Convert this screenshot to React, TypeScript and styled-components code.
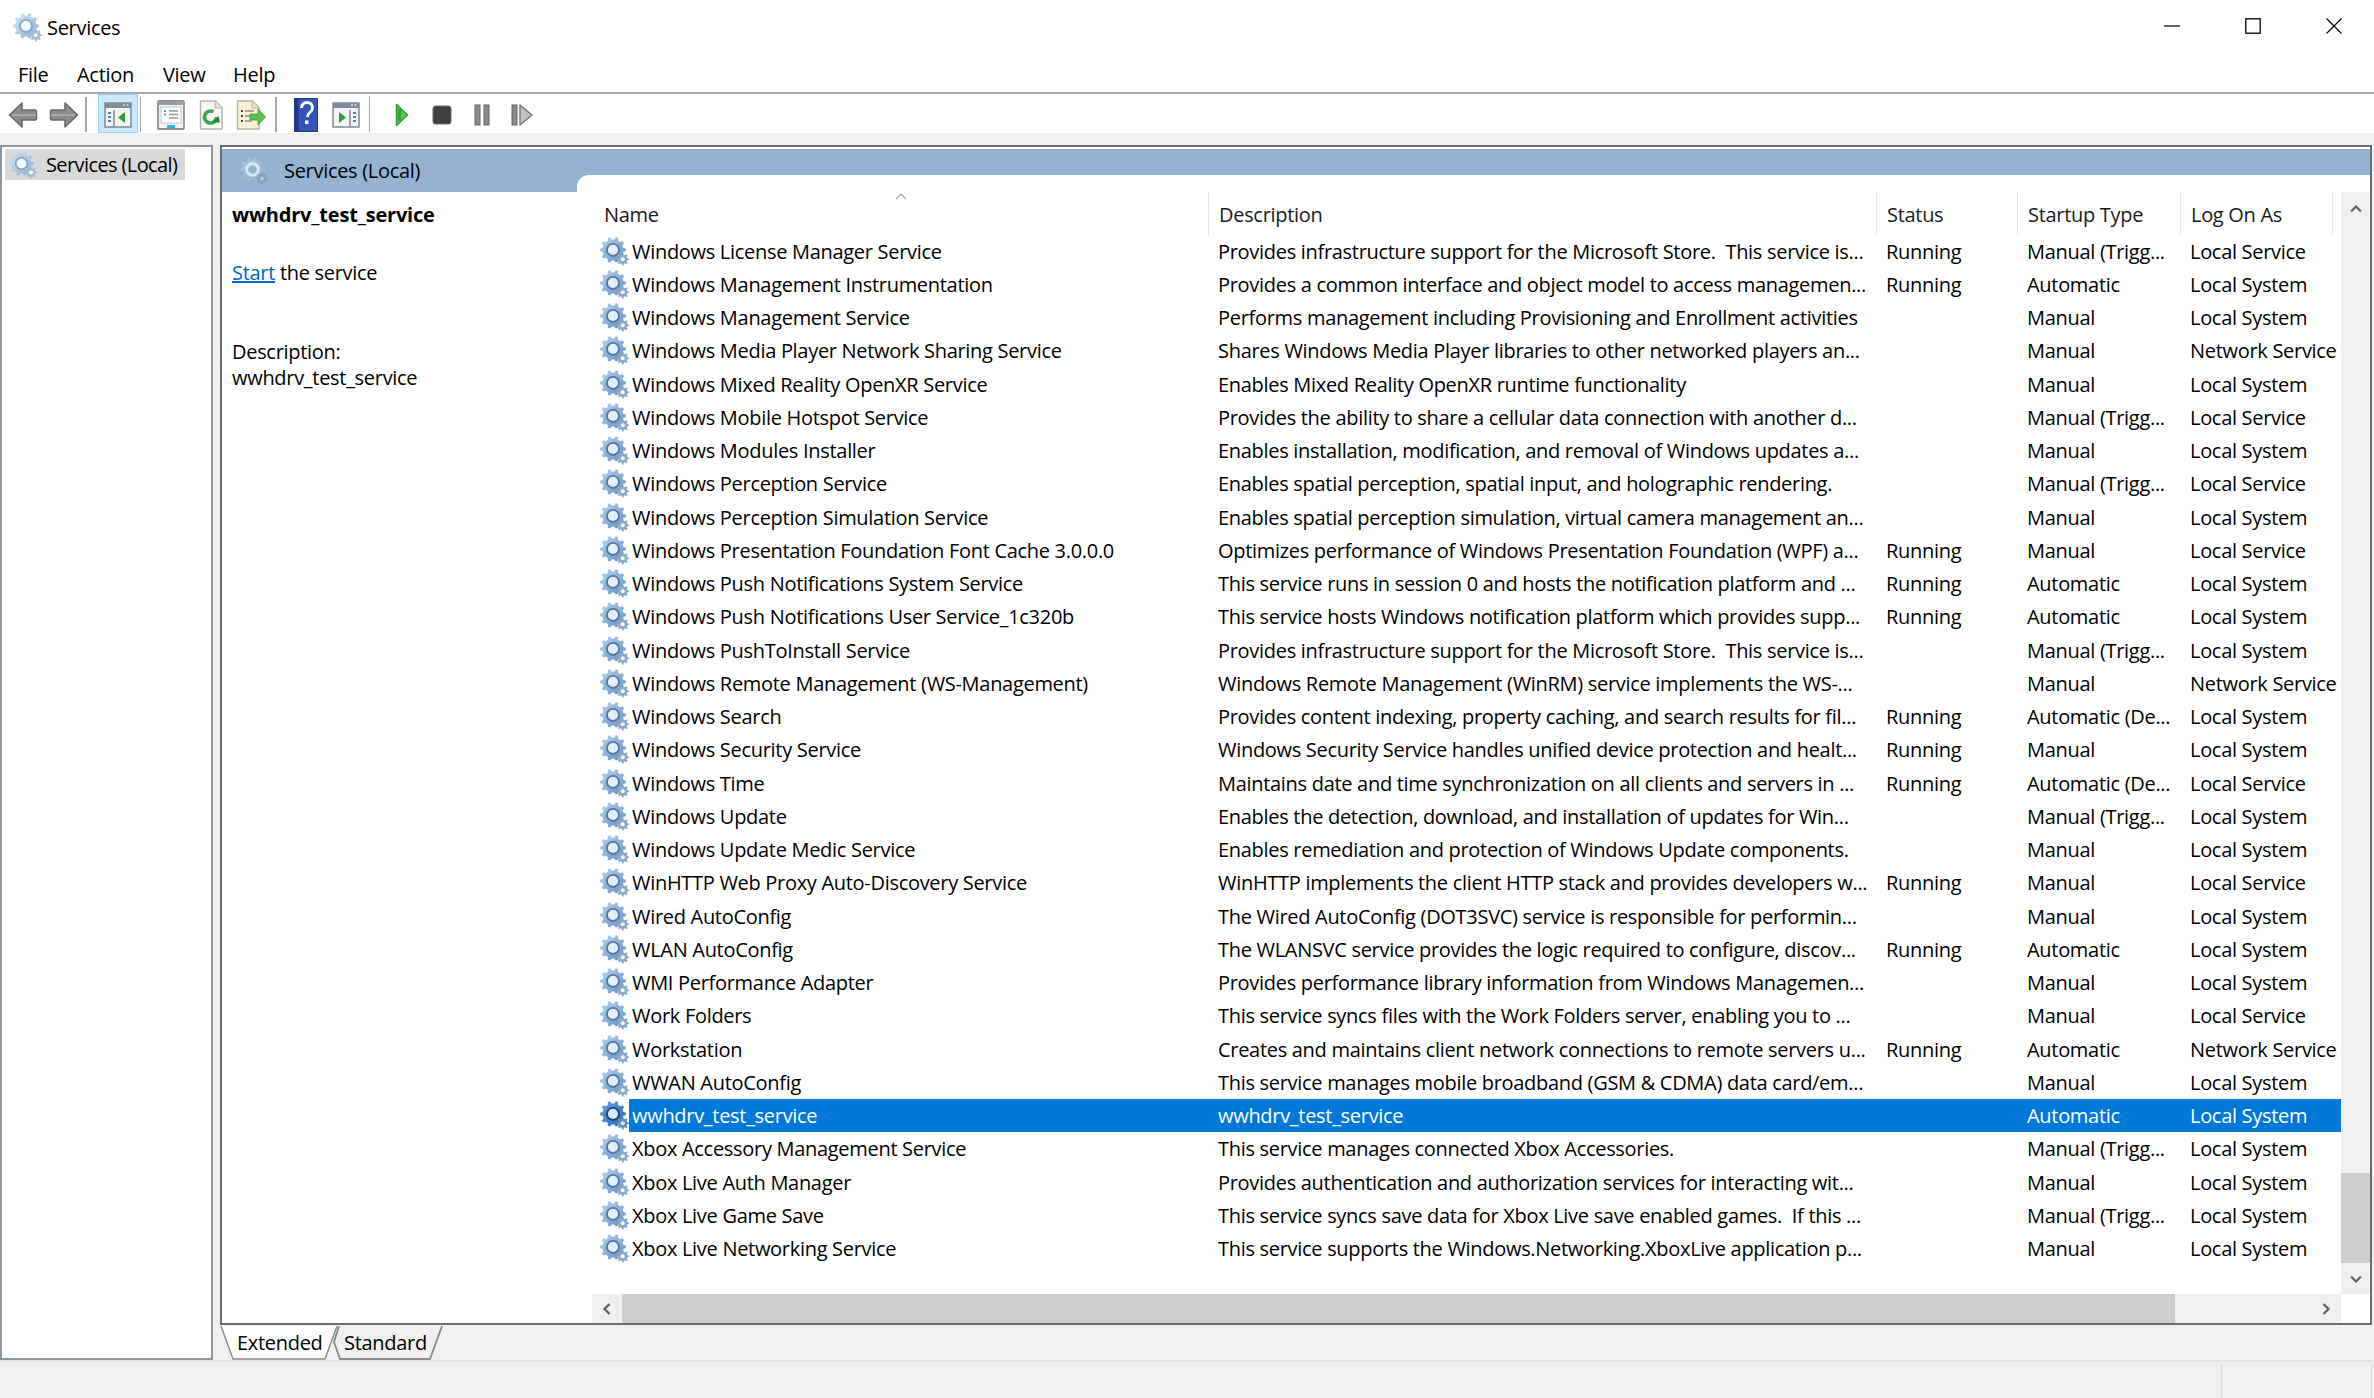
import React, { useId } from 'react';
import styled, { createGlobalStyle } from 'styled-components';

const FONT = '"Open Sans", "Noto Sans", sans-serif';

type Service = {
  name: string;
  desc: string;
  status?: string;
  startup: string;
  logon: string;
  selected?: boolean;
};

const TRUST = 'Provides infrastructure support for the Microsoft Store.  This service is...';

const services: Service[] = [
  { name: 'Windows License Manager Service', desc: TRUST, status: 'Running', startup: 'Manual (Trigg...', logon: 'Local Service' },
  { name: 'Windows Management Instrumentation', desc: 'Provides a common interface and object model to access managemen...', status: 'Running', startup: 'Automatic', logon: 'Local System' },
  { name: 'Windows Management Service', desc: 'Performs management including Provisioning and Enrollment activities', startup: 'Manual', logon: 'Local System' },
  { name: 'Windows Media Player Network Sharing Service', desc: 'Shares Windows Media Player libraries to other networked players an...', startup: 'Manual', logon: 'Network Service' },
  { name: 'Windows Mixed Reality OpenXR Service', desc: 'Enables Mixed Reality OpenXR runtime functionality', startup: 'Manual', logon: 'Local System' },
  { name: 'Windows Mobile Hotspot Service', desc: 'Provides the ability to share a cellular data connection with another d...', startup: 'Manual (Trigg...', logon: 'Local Service' },
  { name: 'Windows Modules Installer', desc: 'Enables installation, modification, and removal of Windows updates a...', startup: 'Manual', logon: 'Local System' },
  { name: 'Windows Perception Service', desc: 'Enables spatial perception, spatial input, and holographic rendering.', startup: 'Manual (Trigg...', logon: 'Local Service' },
  { name: 'Windows Perception Simulation Service', desc: 'Enables spatial perception simulation, virtual camera management an...', startup: 'Manual', logon: 'Local System' },
  { name: 'Windows Presentation Foundation Font Cache 3.0.0.0', desc: 'Optimizes performance of Windows Presentation Foundation (WPF) a...', status: 'Running', startup: 'Manual', logon: 'Local Service' },
  { name: 'Windows Push Notifications System Service', desc: 'This service runs in session 0 and hosts the notification platform and ...', status: 'Running', startup: 'Automatic', logon: 'Local System' },
  { name: 'Windows Push Notifications User Service_1c320b', desc: 'This service hosts Windows notification platform which provides supp...', status: 'Running', startup: 'Automatic', logon: 'Local System' },
  { name: 'Windows PushToInstall Service', desc: TRUST, startup: 'Manual (Trigg...', logon: 'Local System' },
  { name: 'Windows Remote Management (WS-Management)', desc: 'Windows Remote Management (WinRM) service implements the WS-...', startup: 'Manual', logon: 'Network Service' },
  { name: 'Windows Search', desc: 'Provides content indexing, property caching, and search results for fil...', status: 'Running', startup: 'Automatic (De...', logon: 'Local System' },
  { name: 'Windows Security Service', desc: 'Windows Security Service handles unified device protection and healt...', status: 'Running', startup: 'Manual', logon: 'Local System' },
  { name: 'Windows Time', desc: 'Maintains date and time synchronization on all clients and servers in ...', status: 'Running', startup: 'Automatic (De...', logon: 'Local Service' },
  { name: 'Windows Update', desc: 'Enables the detection, download, and installation of updates for Win...', startup: 'Manual (Trigg...', logon: 'Local System' },
  { name: 'Windows Update Medic Service', desc: 'Enables remediation and protection of Windows Update components.', startup: 'Manual', logon: 'Local System' },
  { name: 'WinHTTP Web Proxy Auto-Discovery Service', desc: 'WinHTTP implements the client HTTP stack and provides developers w...', status: 'Running', startup: 'Manual', logon: 'Local Service' },
  { name: 'Wired AutoConfig', desc: 'The Wired AutoConfig (DOT3SVC) service is responsible for performin...', startup: 'Manual', logon: 'Local System' },
  { name: 'WLAN AutoConfig', desc: 'The WLANSVC service provides the logic required to configure, discov...', status: 'Running', startup: 'Automatic', logon: 'Local System' },
  { name: 'WMI Performance Adapter', desc: 'Provides performance library information from Windows Managemen...', startup: 'Manual', logon: 'Local System' },
  { name: 'Work Folders', desc: 'This service syncs files with the Work Folders server, enabling you to ...', startup: 'Manual', logon: 'Local Service' },
  { name: 'Workstation', desc: 'Creates and maintains client network connections to remote servers u...', status: 'Running', startup: 'Automatic', logon: 'Network Service' },
  { name: 'WWAN AutoConfig', desc: 'This service manages mobile broadband (GSM & CDMA) data card/em...', startup: 'Manual', logon: 'Local System' },
  { name: 'wwhdrv_test_service', desc: 'wwhdrv_test_service', startup: 'Automatic', logon: 'Local System', selected: true },
  { name: 'Xbox Accessory Management Service', desc: 'This service manages connected Xbox Accessories.', startup: 'Manual (Trigg...', logon: 'Local System' },
  { name: 'Xbox Live Auth Manager', desc: 'Provides authentication and authorization services for interacting wit...', startup: 'Manual', logon: 'Local System' },
  { name: 'Xbox Live Game Save', desc: 'This service syncs save data for Xbox Live save enabled games.  If this ...', startup: 'Manual (Trigg...', logon: 'Local System' },
  { name: 'Xbox Live Networking Service', desc: 'This service supports the Windows.Networking.XboxLive application p...', startup: 'Manual', logon: 'Local System' },
];

const GlobalStyle = createGlobalStyle`
  html, body {
    margin: 0;
    padding: 0;
    background: #f0f0f0;
  }
  body {
    font-family: ${FONT};
    font-size: 20px;
    letter-spacing: -0.3px;
    color: #000;
    -webkit-font-smoothing: antialiased;
  }
`;

const Window = styled.div`
  width: 2374px;
  height: 1398px;
  display: flex;
  flex-direction: column;
  overflow: hidden;
`;

const TitleBar = styled.div`
  height: 54px;
  background: #fff;
  display: flex;
  align-items: center;
  padding: 0 0 2px 13px;
`;

const TitleText = styled.span`
  margin-left: 5px;
  font-size: 20px;
`;

const WindowControls = styled.div`
  margin-left: auto;
  display: flex;
  height: 100%;
  align-items: flex-start;
`;

const WindowControl = styled.div`
  width: 81px;
  height: 52px;
  display: flex;
  align-items: center;
  justify-content: center;
`;

const MenuBar = styled.div`
  height: 36px;
  background: #fff;
  display: flex;
  align-items: center;
  border-bottom: 2px solid #a9a9a9;
  padding-left: 18px;
`;

const MenuItem = styled.span<{ $w: number }>`
  width: ${({ $w }) => $w}px;
  font-size: 20px;
`;

const Toolbar = styled.div`
  height: 39px;
  background: #fff;
  display: flex;
  align-items: stretch;
  padding-left: 2px;
`;

const ToolGroup = styled.div<{ $pad?: number }>`
  display: flex;
  padding-left: ${({ $pad }) => $pad || 0}px;
`;

const ToolButton = styled.div<{ $active?: boolean; $w?: number }>`
  width: ${({ $w }) => $w || 40}px;
  display: flex;
  align-items: center;
  justify-content: center;
  box-sizing: border-box;
  padding-top: 2px;
  ${({ $active }) => $active && 'background: #cce8ff; border: 1px solid #99d1ff;'}
`;

const ToolSep = styled.div<{ $ml: number }>`
  width: 1.5px;
  margin: 3px 0 1px ${({ $ml }) => $ml}px;
  background: #a8a8a8;
`;

const Gutter = styled.div`
  height: 12px;
  background: #f0f0f0;
`;

const Workspace = styled.div`
  height: 1215px;
  display: flex;
  gap: 7px;
  background: #f0f0f0;
`;

const TreePane = styled.div`
  width: 213px;
  box-sizing: border-box;
  background: #fff;
  border: 2px solid #8f969e;
  padding: 2px 0 0 3px;
`;

const TreeItem = styled.div`
  width: 180px;
  height: 31px;
  box-sizing: border-box;
  background: #d9d9d9;
  display: flex;
  align-items: center;
  padding-left: 4px;
  gap: 9px;
  font-size: 20px;
  letter-spacing: -0.6px;
  white-space: nowrap;
`;

const RightColumn = styled.div`
  flex: 1;
  display: flex;
  flex-direction: column;
  margin-right: 2px;
`;

const Panel = styled.div`
  height: 1180px;
  box-sizing: border-box;
  background: #fff;
  border: 2px solid #6d6d6d;
  padding-top: 2px;
  display: flex;
  flex-direction: column;
`;

const PanelHeader = styled.div`
  height: 43px;
  display: flex;
  background: #96b2d1;
  flex-shrink: 0;
`;

const HeaderTitle = styled.div`
  width: 355px;
  display: flex;
  align-items: center;
  padding-left: 18px;
  gap: 16px;
  box-sizing: border-box;
  font-size: 20px;
`;

const HeaderRest = styled.div`
  flex: 1;
  padding-top: 26px;
  display: flex;
`;

const HeaderNotch = styled.div`
  flex: 1;
  background: #fff;
  border-top-left-radius: 12px;
`;

const PanelBody = styled.div`
  flex: 1;
  display: flex;
  min-height: 0;
`;

const Details = styled.div`
  width: 370px;
  flex-shrink: 0;
  box-sizing: border-box;
  padding: 9px 0 0 10px;
  font-size: 20px;
`;

const DetailsTitle = styled.div`
  font-weight: 700;
  font-size: 20px;
  letter-spacing: -0.2px;
  height: 59px;
`;

const DetailsLine = styled.div<{ $gap?: number }>`
  height: 26px;
  line-height: 26px;
  margin-top: ${({ $gap }) => $gap || 0}px;
`;

const StartLink = styled.span`
  color: #0066cc;
  text-decoration: underline;
`;

const ListArea = styled.div`
  flex: 1;
  min-width: 0;
  display: grid;
  grid-template-columns: 1fr 29px;
  grid-template-rows: 1fr 29px;
`;

const ListMain = styled.div`
  min-width: 0;
  overflow: hidden;
`;

const HeaderRow = styled.div`
  height: 42.5px;
  display: flex;
  position: relative;
`;

const HeaderCell = styled.div<{ $w: number; $pad?: number }>`
  width: ${({ $w }) => $w}px;
  flex-shrink: 0;
  box-sizing: border-box;
  padding: 2px 0 0 ${({ $pad }) => $pad || 10}px;
  display: flex;
  align-items: center;
  font-size: 20px;
  color: #1a1a1a;
  border-right: 1px solid #e5e5e5;
  &:last-child {
    border-right: 0;
  }
`;

const SortCaret = styled.svg`
  position: absolute;
  left: 303px;
  top: 1px;
`;

const Row = styled.div`
  height: 33.25px;
  display: flex;
  align-items: center;
  padding-left: 8px;
`;

const RowBody = styled.div<{ $selected?: boolean }>`
  flex: 1;
  height: 100%;
  display: flex;
  align-items: center;
  background: ${({ $selected }) => ($selected ? '#0078d7' : 'transparent')};
  color: ${({ $selected }) => ($selected ? '#fff' : '#000')};
`;

const Cell = styled.div<{ $w: number; $pad?: number }>`
  width: ${({ $w }) => $w}px;
  flex-shrink: 0;
  box-sizing: border-box;
  padding-left: ${({ $pad }) => $pad || 0}px;
  white-space: pre;
  overflow: hidden;
  font-size: 20px;
`;

const ScrollbarV = styled.div`
  background: #f0f0f0;
  display: flex;
  flex-direction: column;
  align-items: center;
  padding-top: 12px;
  box-sizing: border-box;
`;

const ThumbV = styled.div`
  width: 100%;
  height: 90px;
  margin-top: auto;
  background: #cdcdcd;
`;

const ArrowSlot = styled.div`
  height: 31px;
  flex-shrink: 0;
  display: flex;
  align-items: center;
  justify-content: center;
`;

const ScrollbarH = styled.div`
  background: #f0f0f0;
  display: flex;
  align-items: center;
`;

const ThumbH = styled.div`
  height: 100%;
  width: 1553px;
  background: #cdcdcd;
`;

const ArrowSlotH = styled.div<{ $auto?: boolean }>`
  width: 30px;
  height: 100%;
  flex-shrink: 0;
  display: flex;
  align-items: center;
  justify-content: center;
  ${({ $auto }) => $auto && 'margin-left: auto;'}
`;

const CornerFill = styled.div`
  background: #fff;
`;

const TabStrip = styled.div`
  height: 35px;
  display: flex;
`;

const Tab = styled.div<{ $w: number; $ml?: number; $pad: number }>`
  position: relative;
  width: ${({ $w }) => $w}px;
  margin-left: ${({ $ml }) => $ml || 0}px;
  padding-left: ${({ $pad }) => $pad}px;
  box-sizing: border-box;
  font-size: 20px;
  display: flex;
  align-items: center;
  > svg {
    position: absolute;
    left: 0;
    top: 1px;
  }
  > span {
    position: relative;
  }
`;

const StatusBar = styled.div`
  flex: 1;
  background: #f0f0f0;
  border-top: 2px solid #e6e6e6;
  display: flex;
  justify-content: flex-end;
  padding: 3px 2px 0 0;
`;

const StatusCell = styled.div<{ $w: number }>`
  width: ${({ $w }) => $w}px;
  border-left: 1px solid #d9d9d9;
  border-right: 1px solid #d9d9d9;
`;

// gear outline with square-ish teeth, centred on cx/cy
function gearPath(cx: number, cy: number, ro: number, ri: number, teeth: number) {
  const pts: string[] = [];
  const step = (Math.PI * 2) / teeth;
  for (let i = 0; i < teeth; i++) {
    const a = i * step;
    const list: [number, number][] = [
      [a - step * 0.28, ri],
      [a - step * 0.16, ro],
      [a + step * 0.16, ro],
      [a + step * 0.28, ri],
    ];
    list.forEach(([an, r]) => pts.push(`${(cx + Math.cos(an) * r).toFixed(2)} ${(cy + Math.sin(an) * r).toFixed(2)}`));
  }
  return `M${pts.join('L')}Z`;
}

const BIG_GEAR = gearPath(12.5, 12.5, 12.5, 10.2, 10);
const SMALL_GEAR = gearPath(22, 21.5, 6, 4.5, 8);

type GearProps = { size?: number; tone?: 'normal' | 'pale' | 'title' | 'selected' };

const TONES = {
  normal: { stops: ['#bcd4ec', '#82aad4', '#5f8cba'], ring: '#52769c', hole: '#e6edf4', small: '#8aa8c4', center: '#f4f7fa' },
  title: { stops: ['#d4e4f2', '#a9c6e0', '#8fb0cf'], ring: '#86a6c6', hole: '#f4f8fb', small: '#a6bccf', center: '#fff' },
  pale: { stops: ['#a8c4de', '#9cb9d6', '#96b2d1'], ring: '#d5e8f3', hole: '#96b2d1', small: '#84a0bc', center: '#b9cde0' },
  selected: { stops: ['#6fa6dc', '#3f7fc4', '#2a66a8'], ring: '#1c4474', hole: '#d8e8f6', small: '#5f8fbf', center: '#dbe8f4' },
};

const Gear = ({ size = 28, tone = 'normal' }: GearProps) => {
  const id = useId();
  const t = TONES[tone];
  return (
    <svg width={size} height={size} viewBox="0 0 28 28" style={{ flexShrink: 0 }}>
      <defs>
        <linearGradient id={id} x1="0" y1="0" x2="1" y2="1">
          <stop offset="0" stopColor={t.stops[0]} />
          <stop offset="0.6" stopColor={t.stops[1]} />
          <stop offset="1" stopColor={t.stops[2]} />
        </linearGradient>
      </defs>
      <path d={BIG_GEAR} fill={`url(#${id})`} />
      <circle cx="12.5" cy="12.5" r="5.8" fill={t.hole} stroke={t.ring} strokeWidth={tone === 'pale' ? 3 : 1.8} />
      <path d={SMALL_GEAR} fill={t.small} />
      <circle cx="22" cy="21.5" r="2" fill={t.center} />
    </svg>
  );
};

const ArrowIcon = ({ flip }: { flip?: boolean }) => (
  <svg width="30" height="28" viewBox="0 0 30 28" style={flip ? { transform: 'scaleX(-1)' } : undefined}>
    <path d="M14 2 1.5 14 14 26V19H27a1.5 1.5 0 0 0 1.5-1.5v-7A1.5 1.5 0 0 0 27 9H14Z" fill="#8c8c8c" stroke="#6a6a6a" strokeWidth="1.6" strokeLinejoin="round" />
    <path d="M4 14h24" stroke="#a8a8a8" strokeWidth="2" />
  </svg>
);

const ConsoleTreeIcon = () => (
  <svg width="28" height="28" viewBox="0 0 28 28">
    <rect x="1" y="2" width="26" height="24" fill="#f4f4f4" stroke="#7f8b96" strokeWidth="1.5" />
    <rect x="1" y="2" width="26" height="5" fill="#7f8b96" />
    <path d="M19 4h2M22.5 4h2" stroke="#e8e8e8" strokeWidth="1.4" />
    <path d="M10 9v16" stroke="#7f8b96" strokeWidth="1.5" />
    <path d="M4 12h3M4 16h3M4 20h3" stroke="#4f81bd" strokeWidth="2" />
    <path d="M21 11v11l-7-5.5Z" fill="#2e9e3e" />
  </svg>
);

const SheetIcon = () => (
  <svg width="28" height="30" viewBox="0 0 28 30">
    <rect x="1" y="1" width="26" height="28" rx="1" fill="#f3f3f3" stroke="#8a8f94" strokeWidth="1.8" />
    <rect x="1" y="1" width="26" height="4" fill="#9a9ea3" />
    <rect x="4" y="7" width="20" height="16" fill="#fff" stroke="#c4c8cc" />
    <path d="M12 11h9M12 14.5h9M12 18h9" stroke="#8f979f" strokeWidth="1.6" />
    <path d="M7 11h2M7 14.5h2" stroke="#5b8cc4" strokeWidth="2" />
    <rect x="10" y="25" width="8" height="3" fill="#38b0e0" />
  </svg>
);

const RefreshIcon = () => (
  <svg width="24" height="30" viewBox="0 0 24 30">
    <path d="M1.5 1h15L23 7.5V29H1.5Z" fill="#f7f7f5" stroke="#b3b3ad" strokeWidth="1.4" />
    <path d="M16 1v7h7" fill="#e2e2dc" stroke="#b3b3ad" />
    <path d="M17.5 17a6 6 0 1 1-3-5.2" fill="none" stroke="#3aa84a" strokeWidth="3.6" />
    <path d="M13 22.5h8l-1.5-6.5Z" fill="#1f8a35" />
  </svg>
);

const ExportIcon = () => (
  <svg width="30" height="30" viewBox="0 0 30 30">
    <path d="M1.5 1h15L23 7.5V29H1.5Z" fill="#f8f3d8" stroke="#b9b49a" strokeWidth="1.4" />
    <path d="M16 1v7h7" fill="#ebe5c0" stroke="#b9b49a" />
    <path d="M5 11h2M5 16h2M5 21h2" stroke="#3f3f3f" strokeWidth="2" />
    <path d="M9 11h9M9 16h7M9 21h7" stroke="#8f8f80" strokeWidth="1.6" />
    <path d="M14 14h8v-5l7.5 8-7.5 8v-5h-8Z" fill="#5fc04c" stroke="#3d9e36" strokeWidth="0.8" />
  </svg>
);

const HelpIcon = () => (
  <svg width="24" height="34" viewBox="0 0 24 34">
    <rect x="0.5" y="0.5" width="23" height="33" fill="#3556b8" stroke="#233a88" />
    <rect x="0.5" y="0.5" width="4" height="33" fill="#1f3590" />
    <path d="M7.5 10c.3-3.5 2.6-5.5 5.5-5.5 3.2 0 5.5 2 5.5 5 0 2.5-1.4 3.8-3 5.2-1.4 1.2-2 2.2-2 4.3" fill="none" stroke="#fff" strokeWidth="2.8" />
    <rect x="11" y="22.5" width="3.4" height="3.6" fill="#fff" />
  </svg>
);

const ActionPaneIcon = () => (
  <svg width="28" height="28" viewBox="0 0 28 28">
    <rect x="1" y="2" width="26" height="24" fill="#f4f4f4" stroke="#7f8b96" strokeWidth="1.5" />
    <rect x="1" y="2" width="26" height="5" fill="#7f8b96" />
    <path d="M19 4h2M22.5 4h2" stroke="#e8e8e8" strokeWidth="1.4" />
    <path d="M18 9v16" stroke="#7f8b96" strokeWidth="1.5" />
    <path d="M21 12h3M21 16h3M21 20h3" stroke="#4f81bd" strokeWidth="2" />
    <path d="M7 11v11l7-5.5Z" fill="#2e9e3e" />
  </svg>
);

const PlayIcon = () => (
  <svg width="14" height="24" viewBox="0 0 14 24">
    <path d="M1.5 1.5 12.5 12 1.5 22.5Z" fill="#6cc45c" stroke="#2ca02c" strokeWidth="1.5" strokeLinejoin="round" />
    <path d="M4.5 6v12" stroke="#2fa62f" strokeWidth="3.5" />
  </svg>
);

const StopIcon = () => (
  <svg width="20" height="20" viewBox="0 0 20 20">
    <rect x="1" y="1" width="18" height="18" rx="2.5" fill="#3f3f3f" stroke="#6a6a6a" />
  </svg>
);

const PauseIcon = () => (
  <svg width="16" height="22" viewBox="0 0 16 22">
    <rect x="1" y="1" width="5" height="20" fill="#8a8a8a" stroke="#666" />
    <rect x="10" y="1" width="5" height="20" fill="#8a8a8a" stroke="#666" />
  </svg>
);

const ResumeIcon = () => (
  <svg width="22" height="22" viewBox="0 0 22 22">
    <rect x="1" y="1" width="5" height="20" fill="#8a8a8a" stroke="#666" />
    <path d="M9 1 21 11 9 21Z" fill="#c0c0c0" stroke="#777" strokeWidth="1.4" strokeLinejoin="round" />
  </svg>
);

const Chevron = ({ dir }: { dir: 'up' | 'down' | 'left' | 'right' }) => {
  const rot = { up: 0, down: 180, left: -90, right: 90 }[dir];
  return (
    <svg width="12" height="10" viewBox="0 0 12 10" style={{ transform: `rotate(${rot}deg)` }}>
      <path d="M1 7.5 6 2.5 11 7.5" fill="none" stroke="#606060" strokeWidth="2.2" />
    </svg>
  );
};

const nameW = 589;
const descW = 668;
const statusW = 141;
const startupW = 163;
const logonW = 152;

export default function App() {
  return (
    <>
      <GlobalStyle />
      <Window>
        <TitleBar>
          <Gear size={29} tone="title" />
          <TitleText>Services</TitleText>
          <WindowControls>
            <WindowControl>
              <svg width="16" height="16" viewBox="0 0 16 16"><path d="M0 8h16" stroke="#000" strokeWidth="1.2" /></svg>
            </WindowControl>
            <WindowControl>
              <svg width="16" height="16" viewBox="0 0 16 16"><rect x="0.8" y="0.8" width="14.4" height="14.4" fill="none" stroke="#000" strokeWidth="1.3" /></svg>
            </WindowControl>
            <WindowControl>
              <svg width="16" height="16" viewBox="0 0 16 16"><path d="M.5.5l15 15M15.5.5l-15 15" stroke="#000" strokeWidth="1.1" /></svg>
            </WindowControl>
          </WindowControls>
        </TitleBar>
        <MenuBar>
          <MenuItem $w={59}>File</MenuItem>
          <MenuItem $w={86}>Action</MenuItem>
          <MenuItem $w={70}>View</MenuItem>
          <MenuItem $w={60}>Help</MenuItem>
        </MenuBar>
        <Toolbar>
          <ToolGroup>
            <ToolButton $w={41}><ArrowIcon /></ToolButton>
            <ToolButton $w={41}><ArrowIcon flip /></ToolButton>
          </ToolGroup>
          <ToolSep $ml={1} />
          <ToolGroup $pad={11}>
            <ToolButton $active><ConsoleTreeIcon /></ToolButton>
          </ToolGroup>
          <ToolSep $ml={2} />
          <ToolGroup $pad={10}>
            <ToolButton><SheetIcon /></ToolButton>
            <ToolButton><RefreshIcon /></ToolButton>
            <ToolButton><ExportIcon /></ToolButton>
          </ToolGroup>
          <ToolSep $ml={4} />
          <ToolGroup $pad={9}>
            <ToolButton><HelpIcon /></ToolButton>
            <ToolButton><ActionPaneIcon /></ToolButton>
          </ToolGroup>
          <ToolSep $ml={3} />
          <ToolGroup $pad={12}>
            <ToolButton><PlayIcon /></ToolButton>
            <ToolButton><StopIcon /></ToolButton>
            <ToolButton><PauseIcon /></ToolButton>
            <ToolButton><ResumeIcon /></ToolButton>
          </ToolGroup>
        </Toolbar>
        <Gutter />
        <Workspace>
          <TreePane>
            <TreeItem>
              <Gear size={28} tone="title" />
              Services (Local)
            </TreeItem>
          </TreePane>
          <RightColumn>
            <Panel>
              <PanelHeader>
                <HeaderTitle>
                  <Gear size={28} tone="pale" />
                  Services (Local)
                </HeaderTitle>
                <HeaderRest>
                  <HeaderNotch />
                </HeaderRest>
              </PanelHeader>
              <PanelBody>
                <Details>
                  <DetailsTitle>wwhdrv_test_service</DetailsTitle>
                  <DetailsLine><StartLink>Start</StartLink> the service</DetailsLine>
                  <DetailsLine $gap={53}>Description:</DetailsLine>
                  <DetailsLine>wwhdrv_test_service</DetailsLine>
                </Details>
                <ListArea>
                  <ListMain>
                    <HeaderRow>
                      <HeaderCell $w={nameW + 28} $pad={12}>Name</HeaderCell>
                      <HeaderCell $w={descW}>Description</HeaderCell>
                      <HeaderCell $w={statusW}>Status</HeaderCell>
                      <HeaderCell $w={startupW}>Startup Type</HeaderCell>
                      <HeaderCell $w={logonW}>Log On As</HeaderCell>
                      <SortCaret width="12" height="7" viewBox="0 0 12 7">
                        <path d="M1 6 6 1l5 5" fill="none" stroke="#a8a8a8" strokeWidth="1.2" />
                      </SortCaret>
                    </HeaderRow>
                    {services.map((s) => (
                      <Row key={s.name}>
                        <Gear size={29} tone={s.selected ? 'selected' : 'normal'} />
                        <RowBody $selected={s.selected}>
                          <Cell $w={nameW} $pad={3}>{s.name}</Cell>
                          <Cell $w={descW}>{s.desc}</Cell>
                          <Cell $w={statusW}>{s.status}</Cell>
                          <Cell $w={startupW}>{s.startup}</Cell>
                          <Cell $w={logonW}>{s.logon}</Cell>
                        </RowBody>
                      </Row>
                    ))}
                  </ListMain>
                  <ScrollbarV>
                    <Chevron dir="up" />
                    <ThumbV />
                    <ArrowSlot><Chevron dir="down" /></ArrowSlot>
                  </ScrollbarV>
                  <ScrollbarH>
                    <ArrowSlotH><Chevron dir="left" /></ArrowSlotH>
                    <ThumbH />
                    <ArrowSlotH $auto><Chevron dir="right" /></ArrowSlotH>
                  </ScrollbarH>
                  <CornerFill />
                </ListArea>
              </PanelBody>
            </Panel>
            <TabStrip>
              <Tab $w={118} $pad={17}>
                <svg width="118" height="34" viewBox="0 0 118 34">
                  <path d="M1 0 13 33H105L117 0" fill="#fff" stroke="#8a8a8a" strokeWidth="1.4" />
                </svg>
                <span>Extended</span>
              </Tab>
              <Tab $w={110} $ml={-5} $pad={11}>
                <svg width="110" height="34" viewBox="0 0 110 34">
                  <path d="M6 0 1 16 7 33H97L109 0" fill="#f0f0f0" stroke="#8a8a8a" strokeWidth="1.8" />
                </svg>
                <span>Standard</span>
              </Tab>
            </TabStrip>
          </RightColumn>
        </Workspace>
        <StatusBar>
          <StatusCell $w={149} />
        </StatusBar>
      </Window>
    </>
  );
}
